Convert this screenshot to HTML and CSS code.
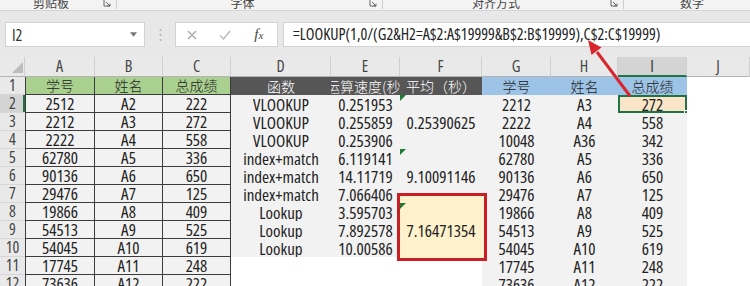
FILE: index.html
```html
<!DOCTYPE html>
<html lang="zh-CN">
<head>
    <meta charset="UTF-8">
    <meta name="viewport" content="width=device-width, initial-scale=1.0">
    <title>LOOKUP 运算速度对比</title>
    <link rel="stylesheet" href="styles.css">
</head>
<body>
<div class="app">

    <!-- ribbon group labels (cut off at the top) -->
    <div class="ribbon">
        <div class="group g1"><span class="group-label">剪贴板</span><svg class="launcher" viewBox="0 0 8 8"><path d="M1 1v6h6M3 3l4 4M4.5 7H7V4.5" fill="none" stroke="#666" stroke-width="1"/></svg></div>
        <div class="group g2"><span class="group-label">字体</span><svg class="launcher" viewBox="0 0 8 8"><path d="M1 1v6h6M3 3l4 4M4.5 7H7V4.5" fill="none" stroke="#666" stroke-width="1"/></svg></div>
        <div class="group g3"><span class="group-label">对齐方式</span><svg class="launcher" viewBox="0 0 8 8"><path d="M1 1v6h6M3 3l4 4M4.5 7H7V4.5" fill="none" stroke="#666" stroke-width="1"/></svg></div>
        <div class="group g4"><span class="group-label">数字</span></div>
    </div>

    <!-- formula bar -->
    <div class="formula-bar">
        <div class="name-box">
            <span>I2</span>
            <svg class="caret" viewBox="0 0 8 5"><path d="M0 0h8L4 5z" fill="#777"/></svg>
        </div>
        <div class="grip">
            <svg viewBox="0 0 3 14" width="3" height="14"><circle cx="1.5" cy="2" r="1" fill="#b0b0b0"/><circle cx="1.5" cy="7" r="1" fill="#b0b0b0"/><circle cx="1.5" cy="12" r="1" fill="#b0b0b0"/></svg>
        </div>
        <div class="fx-box">
            <span class="fx-btn"><svg viewBox="0 0 10 10" width="10" height="10"><path d="M1 1l8 8M9 1l-8 8" stroke="#a8a8a8" stroke-width="1.3"/></svg></span>
            <span class="fx-btn"><svg viewBox="0 0 12 10" width="12" height="10"><path d="M1 5.5l3.5 3.5L11 1" fill="none" stroke="#b8b8b8" stroke-width="1.4"/></svg></span>
            <span class="fx-btn fx">f<small>x</small></span>
        </div>
        <div class="formula">=LOOKUP(1,0/(G2&amp;H2=A$2:A$19999&amp;B$2:B$19999),C$2:C$19999)</div>
    </div>

    <!-- worksheet -->
    <table class="sheet">
        <colgroup>
            <col class="c-rh">
            <col class="c-a"><col class="c-b"><col class="c-c">
            <col class="c-d"><col class="c-e"><col class="c-f">
            <col class="c-g"><col class="c-h"><col class="c-i">
            <col class="c-j">
        </colgroup>
        <thead>
            <tr>
                <th class="corner"><div class="corner-tri"><span></span></div></th>
                <th>A</th><th>B</th><th>C</th><th>D</th><th>E</th><th>F</th><th>G</th><th>H</th><th class="active">I</th><th>J</th>
            </tr>
        </thead>
        <tbody>
            <tr>
                <td class="rh">1</td>
                <td class="b first green zh">学号</td><td class="b green zh">姓名</td><td class="b green zh">总成绩</td>
                <td class="dark zh">函数</td><td class="dark zh"><div class="clip">运算速度(秒)</div></td><td class="dark zh">平均（秒）</td>
                <td class="blue zh">学号</td><td class="blue zh">姓名</td><td class="blue zh">总成绩</td><td></td>
            </tr>
            <tr>
                <td class="rh active">2</td>
                <td class="b first">2512</td><td class="b">A2</td><td class="b">222</td>
                <td class="grey">VLOOKUP</td><td class="grey">0.251953</td>
                <td class="grey mark" rowspan="3"><span class="tri"></span>0.25390625</td>
                <td class="grey">2212</td><td class="grey">A3</td><td class="sel">272<span class="handle"></span></td><td></td>
            </tr>
            <tr>
                <td class="rh">3</td>
                <td class="b first">2212</td><td class="b">A3</td><td class="b">272</td>
                <td class="grey">VLOOKUP</td><td class="grey">0.255859</td>
                <td class="grey">2222</td><td class="grey">A4</td><td class="grey">558</td><td></td>
            </tr>
            <tr>
                <td class="rh">4</td>
                <td class="b first">2222</td><td class="b">A4</td><td class="b">558</td>
                <td class="grey">VLOOKUP</td><td class="grey">0.253906</td>
                <td class="grey">10048</td><td class="grey">A36</td><td class="grey">342</td><td></td>
            </tr>
            <tr>
                <td class="rh">5</td>
                <td class="b first">62780</td><td class="b">A5</td><td class="b">336</td>
                <td class="grey">index+match</td><td class="grey">6.119141</td>
                <td class="grey mark" rowspan="3"><span class="tri"></span>9.10091146</td>
                <td class="grey">62780</td><td class="grey">A5</td><td class="grey">336</td><td></td>
            </tr>
            <tr>
                <td class="rh">6</td>
                <td class="b first">90136</td><td class="b">A6</td><td class="b">650</td>
                <td class="grey">index+match</td><td class="grey">14.11719</td>
                <td class="grey">90136</td><td class="grey">A6</td><td class="grey">650</td><td></td>
            </tr>
            <tr>
                <td class="rh">7</td>
                <td class="b first">29476</td><td class="b">A7</td><td class="b">125</td>
                <td class="grey">index+match</td><td class="grey">7.066406</td>
                <td class="grey">29476</td><td class="grey">A7</td><td class="grey">125</td><td></td>
            </tr>
            <tr>
                <td class="rh">8</td>
                <td class="b first">19866</td><td class="b">A8</td><td class="b">409</td>
                <td class="grey">Lookup</td><td class="grey">3.595703</td>
                <td class="yellow mark" rowspan="3"><span class="tri"></span><span class="val">7.16471354</span></td>
                <td class="grey">19866</td><td class="grey">A8</td><td class="grey">409</td><td></td>
            </tr>
            <tr>
                <td class="rh">9</td>
                <td class="b first">54513</td><td class="b">A9</td><td class="b">525</td>
                <td class="grey">Lookup</td><td class="grey">7.892578</td>
                <td class="grey">54513</td><td class="grey">A9</td><td class="grey">525</td><td></td>
            </tr>
            <tr>
                <td class="rh">10</td>
                <td class="b first">54045</td><td class="b">A10</td><td class="b">619</td>
                <td class="grey">Lookup</td><td class="grey">10.00586</td>
                <td class="grey">54045</td><td class="grey">A10</td><td class="grey">619</td><td></td>
            </tr>
            <tr>
                <td class="rh">11</td>
                <td class="b first">17745</td><td class="b">A11</td><td class="b">248</td>
                <td></td><td></td><td></td>
                <td class="grey">17745</td><td class="grey">A11</td><td class="grey">248</td><td></td>
            </tr>
            <tr>
                <td class="rh">12</td>
                <td class="b first">73636</td><td class="b">A12</td><td class="b">222</td>
                <td></td><td></td><td></td>
                <td class="grey">73636</td><td class="grey">A12</td><td class="grey">222</td><td></td>
            </tr>
        </tbody>
    </table>

    <!-- red frame drawn over F8:F10 -->
    <div class="callout"></div>

    <!-- red arrow pointing at the formula -->
    <svg class="arrow" viewBox="0 0 750 286">
        <line x1="630" y1="96" x2="597" y2="52" stroke="#d8262c" stroke-width="3"/>
        <polygon points="588,40 601.5,47.5 591.5,55" fill="#d8262c"/>
    </svg>

</div>
</body>
</html>
```

FILE: styles.css
```css
* {
    margin: 0;
    padding: 0;
    box-sizing: border-box;
}

body {
    width: 750px;
    height: 286px;
    overflow: hidden;
    background: #fff;
    color: #222;
    font-family: "Open Sans", "Noto Sans CJK SC", sans-serif;
    font-stretch: 82%;
}

.app {
    position: relative;
}

/* ribbon strip at the very top */
.ribbon {
    display: flex;
    height: 11px;
    overflow: hidden;
    background: #f3f3f3;
    border-bottom: 1px solid #d4d4d4;
}

.group {
    display: grid;
    grid-template-columns: 1fr auto;
    align-items: start;
    flex: none;
    height: 9px;
    border-right: 1px solid #cdcdcd;
}

.g1 { width: 117px; }
.g2 { width: 266px; }
.g3 { width: 241px; }
.g4 { width: 150px; border-right: none; grid-template-columns: 1fr 14px; }

.group-label {
    margin-top: -3px;
    font-family: "Noto Sans CJK SC", sans-serif;
    font-size: 12px;
    line-height: 12px;
    color: #444;
    text-align: center;
}

.launcher {
    width: 8px;
    height: 8px;
    margin: -1px 5px 0 1px;
}

/* formula bar */
.formula-bar {
    display: flex;
    align-items: flex-start;
    height: 46px;
    padding: 11px 0 10px 5px;
    background: #e8e8e8;
}

.name-box {
    display: flex;
    align-items: center;
    justify-content: space-between;
    width: 140px;
    height: 25px;
    padding: 0 7px 0 6px;
    background: #fff;
    border: 1px solid #d2d2d2;
    font-size: 16px;
    color: #333;
}

.caret {
    width: 7px;
    height: 5px;
}

.grip {
    display: flex;
    align-items: center;
    justify-content: center;
    width: 30px;
    height: 25px;
}

.fx-box {
    display: flex;
    width: 103px;
    height: 25px;
    background: #fff;
    border: 1px solid #d2d2d2;
}

.fx-btn {
    display: flex;
    align-items: center;
    justify-content: center;
    width: 33px;
}

.fx {
    width: 37px;
    font-family: "Liberation Serif", serif;
    font-style: italic;
    font-stretch: normal;
    font-size: 15px;
    color: #444;
}

.fx small {
    font-size: 11px;
}

.formula {
    flex: 1;
    height: 25px;
    margin-left: 5px;
    padding-left: 9px;
    background: #fff;
    border: 1px solid #d2d2d2;
    border-right: none;
    font-size: 16px;
    line-height: 23px;
    color: #222;
    white-space: nowrap;
    overflow: hidden;
}

/* worksheet grid */
.sheet {
    width: 750px;
    table-layout: fixed;
    border-collapse: separate;
    border-spacing: 0;
}

.c-rh { width: 25px; }
.c-a { width: 70px; }
.c-b { width: 68px; }
.c-c { width: 68px; }
.c-d { width: 100px; }
.c-e { width: 69px; }
.c-f { width: 82px; }
.c-g { width: 69px; }
.c-h { width: 67px; }
.c-i { width: 69px; }
.c-j { width: 63px; }

.sheet thead tr {
    height: 20px;
}

.sheet th {
    padding: 0;
    background: #e9e9e9;
    border-right: 1px solid #cfcfcf;
    border-bottom: 1px solid #b4b4b4;
    font-size: 16px;
    font-weight: normal;
    line-height: 19px;
    color: #444;
    text-align: center;
}

.sheet th.active {
    background: #d4d4d4;
    border-bottom: 2px solid #217346;
    line-height: 18px;
    color: #333;
}

.corner-tri {
    display: flex;
    justify-content: flex-end;
    align-items: flex-end;
    height: 19px;
    padding: 0 1px 3px 0;
}

.corner-tri span {
    border-left: 11px solid transparent;
    border-bottom: 11px solid #bcbcbc;
}

.sheet tbody tr {
    height: 18px;
}

.sheet td {
    padding: 0;
    font-size: 17px;
    line-height: 17px;
    text-align: center;
    white-space: nowrap;
    overflow: hidden;
}

.sheet td.rh {
    background: #e9e9e9;
    border-bottom: 1px solid #d6d6d6;
    font-size: 16px;
    color: #444;
}

.sheet td.rh.active {
    background: #d4d4d4;
    box-shadow: inset -2px 0 #217346;
}

/* bordered source table A:C */
.b {
    background: #f2f2f2;
    border-right: 1px solid #3c3c3c;
    border-bottom: 1px solid #3c3c3c;
}

.first {
    border-left: 1px solid #3c3c3c;
}

.sheet td.zh {
    font-family: "Noto Sans CJK SC", sans-serif;
    font-weight: 300;
    font-size: 14px;
}

.green { background: #a9d08e; }
.dark { background: #565656; color: #fff; }
.blue { background: #9dc3e6; }
.grey { background: #f2f2f2; }
.yellow { background: #fff2cc; }

.clip {
    display: flex;
    justify-content: center;
    overflow: hidden;
    white-space: nowrap;
}

.mark {
    position: relative;
}

.tri {
    position: absolute;
    left: 0;
    top: 0;
    z-index: 2;
    border-top: 6px solid #1e7b34;
    border-right: 6px solid transparent;
}

.val {
    position: relative;
    z-index: 2;
}

.sel {
    position: relative;
    background: #fbe5c8;
    box-shadow: inset 0 0 0 2px #217346;
    overflow: visible;
}

.handle {
    position: absolute;
    right: -3px;
    bottom: -3px;
    width: 6px;
    height: 6px;
    background: #217346;
    border: 1px solid #fff;
}

/* overlays */
.callout {
    position: absolute;
    left: 397px;
    top: 193px;
    width: 90px;
    height: 68px;
    z-index: 1;
    background: #fff2cc;
    border: 3px solid #c81e25;
}

.arrow {
    position: absolute;
    left: 0;
    top: 0;
    width: 750px;
    height: 286px;
    z-index: 3;
    pointer-events: none;
}
```
